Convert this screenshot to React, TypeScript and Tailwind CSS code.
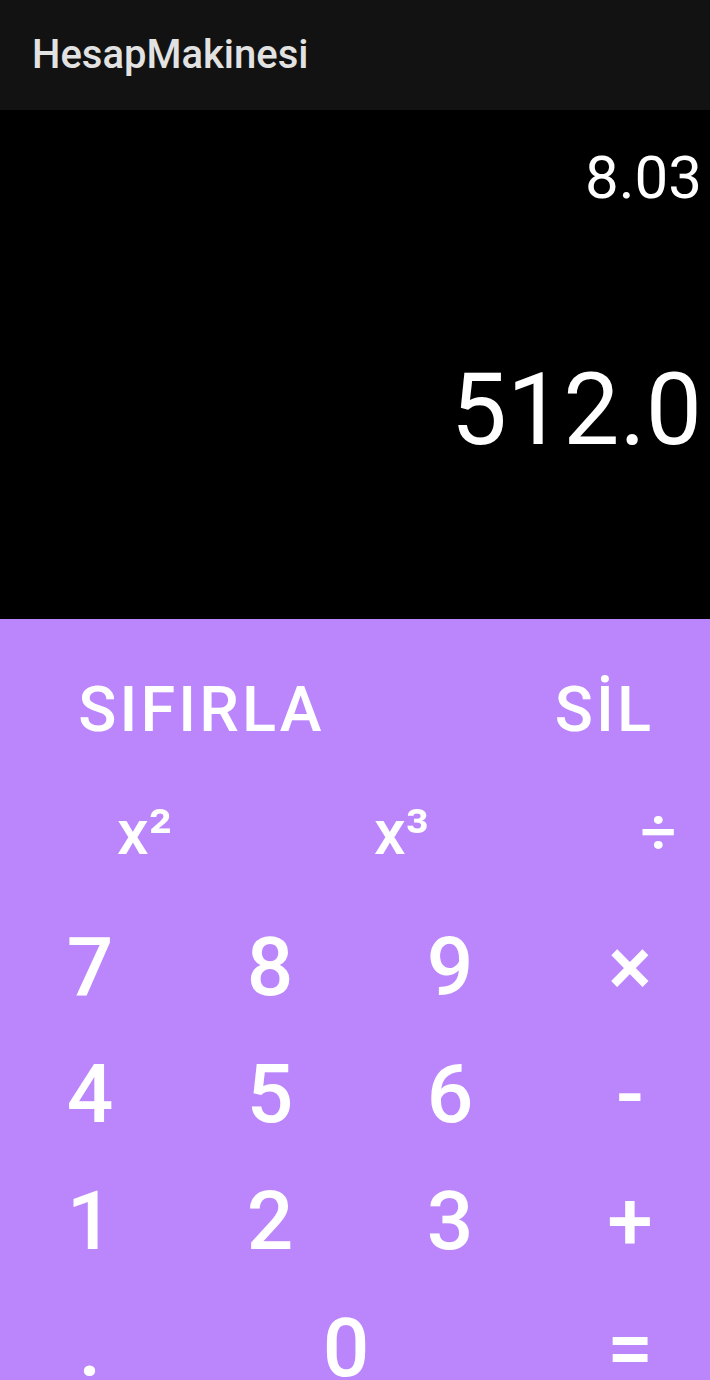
import React from "react";

export default function App() {
  const font = "font-['Roboto',_'Noto_Sans',_sans-serif]";
  return (
    <div className={`w-[710px] h-[1380px] overflow-hidden flex flex-col ${font}`}>
      <div className="h-[110px] bg-[#121212] flex items-center pl-[32px] shrink-0">
        <span className="text-[40px] font-medium text-[#e2e2e2] leading-normal">HesapMakinesi</span>
      </div>
      <div className="h-[509px] bg-black flex flex-col items-end pr-[8px] shrink-0 text-white">
        <div className="mt-[23px] text-[60px] leading-normal">8.03</div>
        <div className="mt-[112px] text-[100px] leading-normal">512.0</div>
      </div>
      <div className="flex-1 bg-[#bb86fc] text-white font-medium overflow-hidden">
        <div className="w-[806px] h-[182px] grid grid-cols-[403px_403px] items-center text-[63px] tracking-[0.05em] leading-normal">
          <div className="flex justify-center">SIFIRLA</div>
          <div className="flex justify-center">SİL</div>
        </div>
        <div className="w-[800px] h-[103px] pl-[16px] pb-[39px] grid grid-cols-[257px_257px_257px] items-center text-[63px] leading-[56px]">
          <div className="flex justify-center">x²</div>
          <div className="flex justify-center">x³</div>
          <div className="flex justify-center">÷</div>
        </div>
        {[
          ["7", "8", "9", "×"],
          ["4", "5", "6", "-"],
          ["1", "2", "3", "+"],
        ].map((row, i) => (
          <div key={i} className="w-[720px] h-[127px] grid grid-cols-[180px_180px_180px_180px] items-center text-[82px] leading-normal">
            {row.map((k) => (
              <div key={k} className="flex justify-center">{k}</div>
            ))}
          </div>
        ))}
        <div className="w-[748px] h-[127px] grid grid-cols-[180px_332px_236px] items-center text-[82px] leading-normal">
          <div className="flex justify-center">.</div>
          <div className="flex justify-center">0</div>
          <div className="flex justify-center">=</div>
        </div>
      </div>
    </div>
  );
}
